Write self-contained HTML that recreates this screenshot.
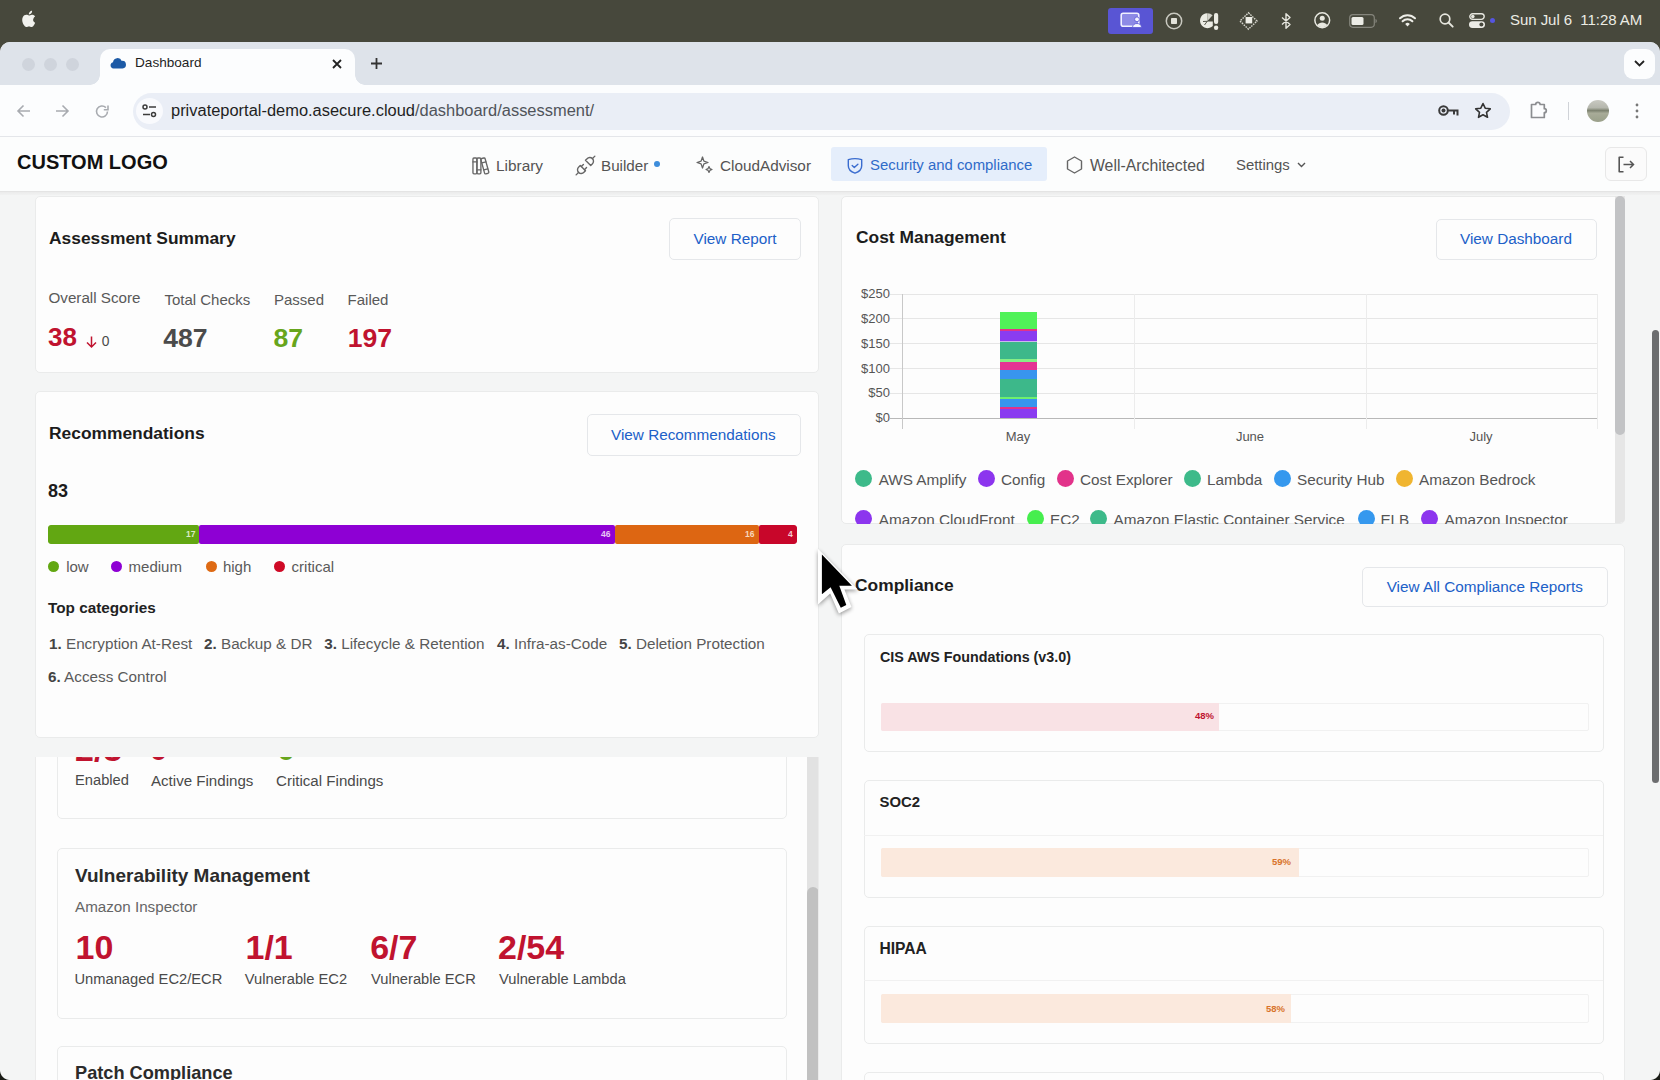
<!DOCTYPE html>
<html><head><meta charset="utf-8"><title>Dashboard</title>
<style>
*{box-sizing:border-box;margin:0;padding:0}
html,body{width:1660px;height:1080px;overflow:hidden}
body{position:relative;background:#f4f5f5;font-family:"Liberation Sans",sans-serif;color:#222}
.a{position:absolute}
.t{position:absolute;white-space:nowrap;line-height:1}
svg{position:absolute;overflow:visible}
/* menubar */
#menubar{left:0;top:0;width:1660px;height:56px;background:#47483c}
/* browser chrome */
#win{left:0;top:42px;width:1660px;height:1038px;background:#f4f5f5;border-radius:10px 10px 0 0;overflow:hidden}
#tabstrip{left:0;top:0;width:1660px;height:43px;background:#dee3ea}
#toolbar{left:0;top:43px;width:1660px;height:52px;background:#fcfdfe;border-bottom:1px solid #e4e6ea}
#tab{left:100px;top:6.5px;width:255px;height:36.5px;background:#fcfdfe;border-radius:10px 10px 0 0}
#addr{left:133px;top:51px;width:1377px;height:37px;background:#eaeef6;border-radius:18.5px}
.card{position:absolute;background:#fdfdfd;border:1px solid #eaebeb;border-radius:5px}
.btn{position:absolute;background:#fdfdfd;border:1px solid #e5e7ea;border-radius:5px;color:#1f5fc4;font-size:15px;text-align:center}
.h{font-weight:bold;color:#1c1c1c}
.lato{color:#333}
</style></head>
<body>
<div id="menubar" class="a">
  <svg style="left:21px;top:10px" width="15" height="18" viewBox="0 0 15 18"><path fill="#f2f2ee" d="M12.3 9.6c0-2.1 1.7-3.1 1.8-3.2-1-1.4-2.5-1.6-3-1.7-1.3-.1-2.5.8-3.1.8-.7 0-1.7-.8-2.7-.7C3.9 4.8 2.6 5.6 1.9 6.9.5 9.4 1.5 13 2.9 15c.7 1 1.5 2 2.5 2s1.4-.6 2.6-.6 1.5.6 2.6.6 1.8-1 2.4-2c.8-1.1 1.1-2.2 1.1-2.3 0 0-2.1-.8-2.1-3.1zM10.3 3.3c.6-.7.9-1.6.8-2.6-.8 0-1.8.5-2.4 1.2-.5.6-1 1.6-.9 2.5.9.1 1.9-.4 2.5-1.1z"/></svg>
  <div class="a" style="left:1108px;top:7.5px;width:45px;height:26.5px;background:#5955d4;border-radius:3px"></div>
  <svg style="left:1120px;top:12px" width="24" height="16" viewBox="0 0 24 16"><rect x="1.2" y="1.2" width="17.6" height="13" rx="2" fill="#8d8ae6" stroke="#f0f0ff" stroke-width="1.6"/><circle cx="17" cy="7.3" r="2.4" fill="#f4f4ff" stroke="#5955d4" stroke-width=".8"/><path d="M12.5 15.5c0-2.6 2-4 4.5-4s4.5 1.4 4.5 4z" fill="#f4f4ff" stroke="#5955d4" stroke-width=".8"/></svg>
  <svg style="left:1165px;top:11.5px" width="18" height="18" viewBox="0 0 18 18"><circle cx="9" cy="9" r="7.7" fill="none" stroke="#c9c9c0" stroke-width="1.5"/><rect x="6" y="6" width="6" height="6" rx=".8" fill="#e2e2da"/></svg>
  <svg style="left:1200px;top:11.5px" width="20" height="19" viewBox="0 0 20 19"><path d="M7 1.2A7.5 7.5 0 1 0 12.8 14V9.5L7 9.5z" fill="#ecece4"/><path d="M7.2 9.3L12.6 3.2A7.5 7.5 0 0 0 7.2 1.2z" fill="#ecece4" opacity=".85"/><path d="M3 9.5l4.2-.2M4.5 13l2.7-3.7" stroke="#45463b" stroke-width=".9"/><rect x="14" y="1" width="4.2" height="11" rx="2" fill="#ecece4"/><circle cx="16.1" cy="15.8" r="2.2" fill="#ecece4"/></svg>
  <svg style="left:1239px;top:11.5px" width="19" height="18" viewBox="0 0 19 18"><path d="M9.5 .8L18 9 9.5 17.2 1 9z" fill="none" stroke="#d5d5cc" stroke-width="1.4" stroke-dasharray="1.6 1"/><rect x="6.6" y="5" width="6.6" height="6.4" fill="#efefe8"/></svg>
  <svg style="left:1280.5px;top:12.5px" width="11" height="16" viewBox="0 0 11 16"><path d="M1 4.5l8 7-4 3.8V.7l4 3.8-8 7" fill="none" stroke="#e6e6de" stroke-width="1.4" stroke-linejoin="round"/></svg>
  <svg style="left:1313.5px;top:12.2px" width="16.5" height="16.5" viewBox="0 0 16.5 16.5"><circle cx="8.25" cy="8.25" r="7.4" fill="none" stroke="#e8e8e0" stroke-width="1.5"/><circle cx="8.25" cy="6.3" r="2.5" fill="#e8e8e0"/><path d="M3.2 13.2c1.2-1.9 3-2.8 5.05-2.8s3.85.9 5.05 2.8A7.4 7.4 0 0 1 3.2 13.2z" fill="#e8e8e0"/></svg>
  <svg style="left:1349px;top:13.5px" width="29" height="14" viewBox="0 0 29 14"><rect x=".7" y=".7" width="24.6" height="12.6" rx="3.2" fill="none" stroke="#85857c" stroke-width="1.2"/><rect x="2.5" y="3" width="12" height="8" rx="1.5" fill="#ecece6"/><path d="M26.5 5v4c.9-.3 1.3-1 1.3-2s-.4-1.7-1.3-2z" fill="#85857c"/></svg>
  <svg style="left:1398px;top:13px" width="19" height="14" viewBox="0 0 19 14"><path d="M9.5 13.5l-2.3-2.6a3.4 3.4 0 0 1 4.6 0z" fill="#eeeee8"/><path d="M4.6 8.2a7 7 0 0 1 9.8 0M2 5.2a10.7 10.7 0 0 1 15 0" fill="none" stroke="#eeeee8" stroke-width="2" stroke-linecap="round"/></svg>
  <svg style="left:1439px;top:13px" width="15" height="15" viewBox="0 0 15 15"><circle cx="6" cy="6" r="4.8" fill="none" stroke="#e6e6de" stroke-width="1.7"/><path d="M9.5 9.5l4.2 4.2" stroke="#e6e6de" stroke-width="1.9" stroke-linecap="round"/></svg>
  <svg style="left:1469px;top:13px" width="16" height="15" viewBox="0 0 16 15"><rect x=".8" y=".8" width="14.4" height="5.6" rx="2.8" fill="none" stroke="#e6e6de" stroke-width="1.4"/><circle cx="3.8" cy="3.6" r="1.8" fill="#e6e6de"/><rect x="0" y="8.2" width="16" height="6.8" rx="3.4" fill="#ecece6"/><circle cx="12.4" cy="11.6" r="2" fill="#45463b"/></svg>
  <div class="a" style="left:1490px;top:18px;width:5px;height:5px;border-radius:50%;background:#5555e0"></div>
  <div class="t" style="left:1510px;top:12px;font-size:15px;color:#ececE4;letter-spacing:-0.05px">Sun Jul 6&nbsp;&nbsp;11:28 AM</div>
</div>
<div id="win" class="a">
  <div id="tabstrip" class="a"></div>
  <div id="tab" class="a"></div>
  <div class="a" style="left:90px;top:33px;width:10px;height:10px;background:radial-gradient(circle at 0 0,transparent 9.5px,#fcfdfe 10px)"></div>
  <div class="a" style="left:355px;top:33px;width:10px;height:10px;background:radial-gradient(circle at 100% 0,transparent 9.5px,#fcfdfe 10px)"></div>
  <div id="toolbar" class="a"></div>
  <div id="addr" class="a"></div>
  <div class="a" style="left:22px;top:16px;width:13px;height:13px;border-radius:50%;background:#cfd4dc"></div>
  <div class="a" style="left:44px;top:16px;width:13px;height:13px;border-radius:50%;background:#cfd4dc"></div>
  <div class="a" style="left:66px;top:16px;width:13px;height:13px;border-radius:50%;background:#cfd4dc"></div>
  <svg style="left:110px;top:15px" width="16" height="12" viewBox="0 0 16 12"><path d="M3.5 11.5A3.2 3.2 0 0 1 3 5.2a4.6 4.6 0 0 1 8.8-1.3A3.8 3.8 0 0 1 12.5 11.5z" fill="#1d5aa6"/></svg>
  <div class="t" style="left:135px;top:14px;font-size:13.6px;color:#1f1f1f">Dashboard</div>
  <svg style="left:332px;top:17px" width="10" height="10" viewBox="0 0 10 10"><path d="M1 1l8 8M9 1L1 9" stroke="#222" stroke-width="1.8"/></svg>
  <svg style="left:371px;top:16px" width="11" height="11" viewBox="0 0 11 11"><path d="M5.5 0v11M0 5.5h11" stroke="#333" stroke-width="1.8"/></svg>
  <div class="a" style="left:1624px;top:7px;width:31px;height:30px;border-radius:9px;background:#fcfdfe"></div>
  <svg style="left:1634px;top:18px" width="11" height="7" viewBox="0 0 11 7"><path d="M1 1l4.5 4.5L10 1" fill="none" stroke="#222" stroke-width="1.8"/></svg>
  <!-- toolbar icons -->
  <svg style="left:16px;top:62px" width="15" height="14" viewBox="0 0 15 14"><path d="M14 7H2M7.5 1.5L2 7l5.5 5.5" fill="none" stroke="#a8abb0" stroke-width="1.6"/></svg>
  <svg style="left:55px;top:62px" width="15" height="14" viewBox="0 0 15 14"><path d="M1 7h12M7.5 1.5L13 7l-5.5 5.5" fill="none" stroke="#a8abb0" stroke-width="1.6"/></svg>
  <svg style="left:95px;top:62px" width="15" height="15" viewBox="0 0 15 15"><path d="M12.5 7.5a5.5 5.5 0 1 1-1.6-3.9" fill="none" stroke="#a8abb0" stroke-width="1.6"/><path d="M13 1.5v4.2H8.8" fill="none" stroke="#a8abb0" stroke-width="1.6"/></svg>
  <div class="a" style="left:136px;top:56px;width:27px;height:26px;border-radius:50%;background:#f9fafd"></div>
  <svg style="left:142px;top:62px" width="15" height="14" viewBox="0 0 15 14"><circle cx="3" cy="3" r="2" fill="none" stroke="#3c3c3c" stroke-width="1.5"/><path d="M7 3h7M1 10.5h7" stroke="#3c3c3c" stroke-width="1.6"/><circle cx="11.5" cy="10.5" r="2" fill="none" stroke="#3c3c3c" stroke-width="1.5"/></svg>
  <div class="t" style="left:171px;top:60px;font-size:16.45px;color:#1f1f1f">privateportal-demo.asecure.cloud<span style="color:#50545a">/dashboard/assessment/</span></div>
  <svg style="left:1438px;top:62px" width="21" height="14" viewBox="0 0 21 14"><circle cx="5.5" cy="6.5" r="4.3" fill="none" stroke="#3a3a3a" stroke-width="2"/><circle cx="5.5" cy="6.5" r="2" fill="#3a3a3a"/><path d="M9.8 6.5H19.5v5M16 6.5v4" fill="none" stroke="#3a3a3a" stroke-width="2"/></svg>
  <svg style="left:1474px;top:60px" width="18" height="17" viewBox="0 0 18 17"><path d="M9 1.5l2.2 4.7 5.1.6-3.8 3.5 1 5-4.5-2.5-4.5 2.5 1-5L1.7 6.8l5.1-.6z" fill="none" stroke="#333" stroke-width="1.6" stroke-linejoin="round"/></svg>
  <svg style="left:1530px;top:58px" width="19" height="19" viewBox="0 0 19 19"><path d="M1.5 4.5h4.2a2.2 2.2 0 0 1 4.4 0h4.2v4.2a2 2 0 0 1 0 4v4.8H1.5z" fill="none" stroke="#8b8d90" stroke-width="1.7" stroke-linejoin="round"/></svg>
  <div class="a" style="left:1567.5px;top:60px;width:1px;height:18px;background:#d0d3d8"></div>
  <div class="a" style="left:1586.5px;top:58px;width:22px;height:22px;border-radius:50%;background:linear-gradient(#c9c9c2 0%,#b5b7ad 35%,#7d8270 48%,#a8ab98 60%,#9aa08a 100%)"></div>
  <svg style="left:1635px;top:61px" width="4" height="16" viewBox="0 0 4 16"><circle cx="2" cy="2" r="1.4" fill="#777"/><circle cx="2" cy="8" r="1.4" fill="#777"/><circle cx="2" cy="14" r="1.4" fill="#777"/></svg>
</div>
<!-- page header -->
<div class="a" style="left:0;top:137px;width:1660px;height:55px;background:#fcfdfd;border-bottom:1px solid #e4e4e4"></div><div class="a" style="left:0;top:192px;width:1660px;height:3px;background:linear-gradient(#ebebeb,#f1f2f2)"></div>
<div class="t" style="left:17px;top:152px;font-size:20px;font-weight:bold;color:#111">CUSTOM LOGO</div>
<svg style="left:468px;top:153.5px" width="23.8" height="23.8" viewBox="0 0 24 24"><g fill="none" stroke="#666" stroke-width="1.35" stroke-linecap="round" stroke-linejoin="round"><path d="M6 4h2a1 1 0 0 1 1 1v14a1 1 0 0 1-1 1H6a1 1 0 0 1-1-1V5a1 1 0 0 1 1-1z"/><path d="M10 4h2a1 1 0 0 1 1 1v14a1 1 0 0 1-1 1h-2a1 1 0 0 1-1-1V5a1 1 0 0 1 1-1z"/><path d="M5 8h4M9 16h4"/><path d="M13.8 4.56l2.18-.53c.56-.14 1.13.19 1.28.73l3.7 13.42a1.02 1.02 0 0 1-.63 1.22l-2.32.57c-.56.14-1.13-.19-1.28-.73L13.03 5.82a1.02 1.02 0 0 1 .64-1.22z"/><path d="M14 9l4-1M16 16l3.92-.98"/></g></svg>
<div class="t" style="left:496px;top:157.7px;font-size:15.4px;color:#545454">Library</div>
<svg style="left:573px;top:152.5px" width="25" height="25" viewBox="0 0 24 24"><g fill="none" stroke="#666" stroke-width="1.35" stroke-linecap="round" stroke-linejoin="round"><path d="M7 12l5 5-1.5 1.5a3.54 3.54 0 1 1-5-5z"/><path d="M17 12l-5-5 1.5-1.5a3.54 3.54 0 1 1 5 5z"/><path d="M3 21l2.5-2.5M18.5 5.5L21 3M10 11l-2 2M13 14l-2 2"/></g></svg>
<div class="t" style="left:601px;top:157.7px;font-size:15.2px;color:#545454">Builder</div>
<div class="a" style="left:654px;top:161px;width:6px;height:6px;border-radius:50%;background:#3d8ddb"></div>
<svg style="left:696px;top:156px" width="18" height="17" viewBox="0 0 18 17"><path d="M6.5 1l1.4 4.1L12 6.5 7.9 7.9 6.5 12 5.1 7.9 1 6.5l4.1-1.4z" fill="none" stroke="#666" stroke-width="1.3" stroke-linejoin="round"/><path d="M13 10.5l.9 2.1 2.1.9-2.1.9L13 16.5l-.9-2.1-2.1-.9 2.1-.9z" fill="none" stroke="#666" stroke-width="1.2" stroke-linejoin="round"/></svg>
<div class="t" style="left:720px;top:157.7px;font-size:15.3px;color:#545454">CloudAdvisor</div>
<div class="a" style="left:831px;top:147px;width:216px;height:34px;background:#e5eefb;border-radius:3px"></div>
<svg style="left:847px;top:156.5px" width="16" height="17" viewBox="0 0 16 17"><path d="M1.3 2.6Q8 0.6 14.7 2.6V8.8C14.7 12.4 11.8 15 8 16.2 4.2 15 1.3 12.4 1.3 8.8Z" fill="none" stroke="#3a6ccf" stroke-width="1.4" stroke-linejoin="round"/><path d="M5.2 8.6l2.1 2 3.6-3.4" fill="none" stroke="#3a6ccf" stroke-width="1.4" stroke-linecap="round" stroke-linejoin="round"/></svg>
<div class="t" style="left:870px;top:157.7px;font-size:14.9px;color:#2f6bc9">Security and compliance</div>
<svg style="left:1066px;top:156px" width="17" height="18" viewBox="0 0 17 18"><path d="M8.5 1l7 4v8l-7 4-7-4V5z" fill="none" stroke="#666" stroke-width="1.4" stroke-linejoin="round"/></svg>
<div class="t" style="left:1090px;top:157.7px;font-size:15.8px;color:#545454">Well-Architected</div>
<div class="t" style="left:1236px;top:157.7px;font-size:14.9px;color:#545454">Settings</div>
<svg style="left:1297px;top:162px" width="9" height="6" viewBox="0 0 9 6"><path d="M1 1l3.5 3.5L8 1" fill="none" stroke="#555" stroke-width="1.4"/></svg>
<div class="a" style="left:1605px;top:147px;width:42px;height:34px;border:1px solid #e8e8e8;border-radius:6px;background:#fbfbfb"></div>
<svg style="left:1617px;top:156px" width="18" height="17" viewBox="0 0 18 17"><path d="M6.5 1.2H2.2v14.6h4.3" fill="none" stroke="#555" stroke-width="1.6" stroke-linejoin="round"/><path d="M6.5 8.5h10M13 5l3.5 3.5L13 12" fill="none" stroke="#555" stroke-width="1.5"/></svg>
<!-- LEFT COLUMN -->
<div class="card" style="left:35px;top:196px;width:784px;height:177px"></div>
<div class="t h" style="left:49px;top:229.5px;font-size:17.4px">Assessment Summary</div>
<div class="btn" style="left:669px;top:218px;width:132px;height:42px"></div>
<div class="t" style="left:693.5px;top:231px;font-size:15.3px;color:#2060c8">View Report</div>
<div class="t" style="left:48.5px;top:289.5px;font-size:15.2px;color:#595959">Overall Score</div>
<div class="t" style="left:164.4px;top:292.3px;font-size:15px;color:#595959">Total Checks</div>
<div class="t" style="left:274px;top:292.3px;font-size:15px;color:#595959">Passed</div>
<div class="t" style="left:347.6px;top:292.3px;font-size:15px;color:#595959">Failed</div>
<div class="t" style="left:48px;top:324px;font-size:26px;font-weight:bold;color:#c0132f">38</div>
<svg style="left:86px;top:335.5px" width="11" height="12" viewBox="0 0 11 12"><path d="M5.5 0.5v10.5M1 6.5l4.5 4.5L10 6.5" fill="none" stroke="#c0132f" stroke-width="1.5"/></svg>
<div class="t" style="left:101.8px;top:334.6px;font-size:13.8px;color:#4a4a4a">0</div>
<div class="t" style="left:163.2px;top:325.2px;font-size:26.6px;font-weight:bold;color:#4b4b4b">487</div>
<div class="t" style="left:273.5px;top:325.2px;font-size:26.6px;font-weight:bold;color:#67a51c">87</div>
<div class="t" style="left:347.7px;top:325.2px;font-size:26.6px;font-weight:bold;color:#c0132f">197</div>

<div class="card" style="left:35px;top:391px;width:784px;height:347px"></div>
<div class="t h" style="left:49px;top:424.7px;font-size:17.4px">Recommendations</div>
<div class="btn" style="left:587px;top:414px;width:214px;height:42px"></div>
<div class="t" style="left:611px;top:426.5px;font-size:15.3px;color:#2060c8">View Recommendations</div>
<div class="t h" style="left:48px;top:481.5px;font-size:18px">83</div>
<div class="a" style="left:48px;top:525px;width:749px;height:19px;border-radius:3px;overflow:hidden">
  <div class="a" style="left:0;top:0;width:151px;height:19px;background:#62a712;border-radius:2px"></div>
  <div class="a" style="left:151px;top:0;width:416px;height:19px;background:#8e00d4;border-radius:2px"></div>
  <div class="a" style="left:567px;top:0;width:144px;height:19px;background:#dd6612;border-radius:2px"></div>
  <div class="a" style="left:711px;top:0;width:38px;height:19px;background:#c8062a;border-radius:2px"></div>
  <div class="t" style="left:138px;top:5px;font-size:8.5px;font-weight:bold;color:#d9ecc4">17</div>
  <div class="t" style="left:553px;top:5px;font-size:8.5px;font-weight:bold;color:#e8c8f5">46</div>
  <div class="t" style="left:697px;top:5px;font-size:8.5px;font-weight:bold;color:#f7d7bd">16</div>
  <div class="t" style="left:740px;top:5px;font-size:8.5px;font-weight:bold;color:#f5c9cf">4</div>
</div>
<div class="a" style="left:48px;top:561px;width:11px;height:11px;border-radius:50%;background:#62a712"></div>
<div class="t" style="left:66.2px;top:559.3px;font-size:15px;color:#5a5a5a">low</div>
<div class="a" style="left:111px;top:561px;width:11px;height:11px;border-radius:50%;background:#8e00d4"></div>
<div class="t" style="left:128.6px;top:559.3px;font-size:15px;color:#5a5a5a">medium</div>
<div class="a" style="left:205.5px;top:561px;width:11px;height:11px;border-radius:50%;background:#de6a14"></div>
<div class="t" style="left:222.9px;top:559.3px;font-size:15px;color:#5a5a5a">high</div>
<div class="a" style="left:274px;top:561px;width:11px;height:11px;border-radius:50%;background:#cf0a26"></div>
<div class="t" style="left:291.6px;top:559.3px;font-size:15px;color:#5a5a5a">critical</div>
<div class="t h" style="left:48px;top:600.1px;font-size:15.3px;color:#222">Top categories</div>
<div class="t" style="left:49px;top:636.4px;font-size:15.25px;color:#5a5a5a"><b style="color:#444">1.</b> Encryption At-Rest</div>
<div class="t" style="left:204px;top:636.4px;font-size:15.25px;color:#5a5a5a"><b style="color:#444">2.</b> Backup &amp; DR</div>
<div class="t" style="left:324.3px;top:636.4px;font-size:15.25px;color:#5a5a5a"><b style="color:#444">3.</b> Lifecycle &amp; Retention</div>
<div class="t" style="left:497px;top:636.4px;font-size:15.25px;color:#5a5a5a"><b style="color:#444">4.</b> Infra-as-Code</div>
<div class="t" style="left:619px;top:636.4px;font-size:15.25px;color:#5a5a5a"><b style="color:#444">5.</b> Deletion Protection</div>
<div class="t" style="left:48px;top:668.9px;font-size:15.25px;color:#5a5a5a"><b style="color:#444">6.</b> Access Control</div>

<!-- lower scroll container -->
<div class="a" style="left:35px;top:757px;width:784px;height:330px;background:#fdfdfd;border-left:1px solid #ebebeb;border-right:1px solid #ebebeb;overflow:hidden">
  <div class="card" style="left:20.5px;top:-80px;width:730px;height:142px"></div>
  <div class="t" style="left:39px;top:-25px;font-size:34px;font-weight:bold;color:#c0132f">2/3</div>
  <div class="t" style="left:113.5px;top:-25px;font-size:33px;font-weight:bold;color:#c0132f">0</div>
  <div class="t" style="left:241px;top:-25px;font-size:33px;font-weight:bold;color:#67a51c">0</div>
  <div class="t" style="left:39px;top:16px;font-size:14.7px;color:#4a4a4a">Enabled</div>
  <div class="t" style="left:115px;top:16px;font-size:15.1px;color:#4a4a4a">Active Findings</div>
  <div class="t" style="left:240px;top:16px;font-size:15.1px;color:#4a4a4a">Critical Findings</div>
  <div class="card" style="left:20.5px;top:91px;width:730px;height:171px"></div>
  <div class="t" style="left:39px;top:109.4px;font-size:19px;font-weight:bold;color:#2b2b2b">Vulnerability Management</div>
  <div class="t" style="left:39px;top:142px;font-size:15.2px;color:#666">Amazon Inspector</div>
  <div class="t" style="left:39.5px;top:173px;font-size:34px;font-weight:bold;color:#c0132f">10</div>
  <div class="t" style="left:209.5px;top:173px;font-size:34px;font-weight:bold;color:#c0132f">1/1</div>
  <div class="t" style="left:334.2px;top:173px;font-size:34px;font-weight:bold;color:#c0132f">6/7</div>
  <div class="t" style="left:462px;top:173px;font-size:34px;font-weight:bold;color:#c0132f">2/54</div>
  <div class="t" style="left:38.5px;top:215px;font-size:14.7px;color:#4a4a4a">Unmanaged EC2/ECR</div>
  <div class="t" style="left:208.8px;top:215px;font-size:14.7px;color:#4a4a4a">Vulnerable EC2</div>
  <div class="t" style="left:335px;top:215px;font-size:14.7px;color:#4a4a4a">Vulnerable ECR</div>
  <div class="t" style="left:463px;top:215px;font-size:14.7px;color:#4a4a4a">Vulnerable Lambda</div>
  <div class="card" style="left:20.5px;top:289px;width:730px;height:171px"></div>
  <div class="t" style="left:39px;top:307px;font-size:18.2px;font-weight:bold;color:#2b2b2b">Patch Compliance</div>
  <div class="a" style="left:771px;top:0;width:12px;height:330px;background:#e2e2e2"></div>
  <div class="a" style="left:771px;top:130px;width:12px;height:200px;background:#c1c1c1;border-radius:6px 6px 0 0"></div>
</div>
<!-- RIGHT COLUMN -->
<div class="a" style="left:841px;top:196px;width:784px;height:328px;background:#fdfdfd;border:1px solid #e9eaea;border-radius:5px;overflow:hidden"></div>
<div class="t h" style="left:856px;top:229.3px;font-size:17.4px">Cost Management</div>
<div class="btn" style="left:1436px;top:219px;width:161px;height:41px"></div>
<div class="t" style="left:1460px;top:231px;font-size:15.3px;color:#2060c8">View Dashboard</div>
<div class="a" style="left:890px;top:293.5px;width:707px;height:1px;background:#e6e6e6"></div><div class="t" style="left:790px;width:100px;text-align:right;top:287.0px;font-size:13px;color:#555">$250</div><div class="a" style="left:890px;top:318.4px;width:707px;height:1px;background:#e6e6e6"></div><div class="t" style="left:790px;width:100px;text-align:right;top:311.9px;font-size:13px;color:#555">$200</div><div class="a" style="left:890px;top:343.2px;width:707px;height:1px;background:#e6e6e6"></div><div class="t" style="left:790px;width:100px;text-align:right;top:336.7px;font-size:13px;color:#555">$150</div><div class="a" style="left:890px;top:368.1px;width:707px;height:1px;background:#e6e6e6"></div><div class="t" style="left:790px;width:100px;text-align:right;top:361.6px;font-size:13px;color:#555">$100</div><div class="a" style="left:890px;top:392.9px;width:707px;height:1px;background:#e6e6e6"></div><div class="t" style="left:790px;width:100px;text-align:right;top:386.4px;font-size:13px;color:#555">$50</div><div class="a" style="left:890px;top:417.8px;width:707px;height:1px;background:#e6e6e6"></div><div class="t" style="left:790px;width:100px;text-align:right;top:411.3px;font-size:13px;color:#555">$0</div><div class="a" style="left:890px;top:417.8px;width:707px;height:1px;background:#b8b8b8"></div><div class="a" style="left:901.5px;top:294px;width:1px;height:135px;background:#c8c8c8"></div><div class="a" style="left:1133.5px;top:294px;width:1px;height:135px;background:#ececec"></div><div class="a" style="left:1365.5px;top:294px;width:1px;height:135px;background:#ececec"></div><div class="a" style="left:1596.5px;top:294px;width:1px;height:135px;background:#ececec"></div><div class="t" style="left:968px;width:100px;text-align:center;top:429.5px;font-size:13px;color:#555">May</div><div class="t" style="left:1200px;width:100px;text-align:center;top:429.5px;font-size:13px;color:#555">June</div><div class="t" style="left:1431px;width:100px;text-align:center;top:429.5px;font-size:13px;color:#555">July</div>
<div class="a" style="left:999.5px;top:311.9px;width:37.3px;height:17.0px;background:#50f258"></div><div class="a" style="left:999.5px;top:328.9px;width:37.3px;height:2.2px;background:#e2328a"></div><div class="a" style="left:999.5px;top:331.1px;width:37.3px;height:9.5px;background:#8a3cf0"></div><div class="a" style="left:999.5px;top:340.6px;width:37.3px;height:1.6px;background:#c9b9ee"></div><div class="a" style="left:999.5px;top:342.2px;width:37.3px;height:17.2px;background:#3db88a"></div><div class="a" style="left:999.5px;top:359.4px;width:37.3px;height:2.3px;background:#86ee86"></div><div class="a" style="left:999.5px;top:361.7px;width:37.3px;height:8.3px;background:#e43393"></div><div class="a" style="left:999.5px;top:370px;width:37.3px;height:9.4px;background:#3895ee"></div><div class="a" style="left:999.5px;top:379.4px;width:37.3px;height:17.3px;background:#3db88a"></div><div class="a" style="left:999.5px;top:396.7px;width:37.3px;height:2.7px;background:#6ef06e"></div><div class="a" style="left:999.5px;top:399.4px;width:37.3px;height:7.3px;background:#3895ee"></div><div class="a" style="left:999.5px;top:406.7px;width:37.3px;height:2.2px;background:#e2328a"></div><div class="a" style="left:999.5px;top:408.9px;width:37.3px;height:9.4px;background:#8a3cf0"></div>
<div class="a" style="left:841px;top:196px;width:784px;height:328px;overflow:hidden">
<div class="a" style="left:calc(-841px + 855.3px);top:calc(-196px + 470.0px);width:17px;height:17px;border-radius:50%;background:#3dba8a"></div><div class="t" style="left:calc(-841px + 878.7px);top:calc(-196px + 472.1px);font-size:15.3px;color:#555">AWS Amplify</div><div class="a" style="left:calc(-841px + 978.2px);top:calc(-196px + 470.0px);width:17px;height:17px;border-radius:50%;background:#8c35ee"></div><div class="t" style="left:calc(-841px + 1001px);top:calc(-196px + 472.1px);font-size:15.3px;color:#555">Config</div><div class="a" style="left:calc(-841px + 1056.5px);top:calc(-196px + 470.0px);width:17px;height:17px;border-radius:50%;background:#e2328a"></div><div class="t" style="left:calc(-841px + 1080px);top:calc(-196px + 472.1px);font-size:15.3px;color:#555">Cost Explorer</div><div class="a" style="left:calc(-841px + 1183.5px);top:calc(-196px + 470.0px);width:17px;height:17px;border-radius:50%;background:#3dba8a"></div><div class="t" style="left:calc(-841px + 1207px);top:calc(-196px + 472.1px);font-size:15.3px;color:#555">Lambda</div><div class="a" style="left:calc(-841px + 1274.0px);top:calc(-196px + 470.0px);width:17px;height:17px;border-radius:50%;background:#3598ee"></div><div class="t" style="left:calc(-841px + 1297px);top:calc(-196px + 472.1px);font-size:15.3px;color:#555">Security Hub</div><div class="a" style="left:calc(-841px + 1396.0px);top:calc(-196px + 470.0px);width:17px;height:17px;border-radius:50%;background:#f0b530"></div><div class="t" style="left:calc(-841px + 1419px);top:calc(-196px + 472.1px);font-size:15.3px;color:#555">Amazon Bedrock</div><div class="a" style="left:calc(-841px + 855.3px);top:calc(-196px + 510.0px);width:17px;height:17px;border-radius:50%;background:#8c35ee"></div><div class="t" style="left:calc(-841px + 878.7px);top:calc(-196px + 512.0999999999999px);font-size:15.3px;color:#555">Amazon CloudFront</div><div class="a" style="left:calc(-841px + 1026.5px);top:calc(-196px + 510.0px);width:17px;height:17px;border-radius:50%;background:#46ee4e"></div><div class="t" style="left:calc(-841px + 1050px);top:calc(-196px + 512.0999999999999px);font-size:15.3px;color:#555">EC2</div><div class="a" style="left:calc(-841px + 1089.5px);top:calc(-196px + 510.0px);width:17px;height:17px;border-radius:50%;background:#3dba8a"></div><div class="t" style="left:calc(-841px + 1113.5px);top:calc(-196px + 512.0999999999999px);font-size:15.3px;color:#555">Amazon Elastic Container Service</div><div class="a" style="left:calc(-841px + 1357.5px);top:calc(-196px + 510.0px);width:17px;height:17px;border-radius:50%;background:#3598ee"></div><div class="t" style="left:calc(-841px + 1380.4px);top:calc(-196px + 512.0999999999999px);font-size:15.3px;color:#555">ELB</div><div class="a" style="left:calc(-841px + 1420.8px);top:calc(-196px + 510.0px);width:17px;height:17px;border-radius:50%;background:#8c35ee"></div><div class="t" style="left:calc(-841px + 1444.5px);top:calc(-196px + 512.0999999999999px);font-size:15.3px;color:#555">Amazon Inspector</div>
</div>
<div class="a" style="left:1614.5px;top:196px;width:10.5px;height:327px;background:#e6e6e6;border-radius:0 0 5px 0"></div>
<div class="a" style="left:1614.5px;top:196px;width:10.5px;height:239px;background:#c2c3c5;border-radius:5px"></div>

<div class="card" style="left:841px;top:544px;width:784px;height:600px"></div>
<div class="t h" style="left:855px;top:576.6px;font-size:17.4px">Compliance</div>
<div class="btn" style="left:1362px;top:566.5px;width:246px;height:40.5px"></div>
<div class="t" style="left:1386.7px;top:578.6px;font-size:15.3px;color:#2060c8">View All Compliance Reports</div>

<div class="card" style="left:863.5px;top:634px;width:740px;height:118px"></div>
<div class="t" style="left:880px;top:649.6px;font-size:14.3px;font-weight:bold;color:#222">CIS AWS Foundations (v3.0)</div>
<div class="a" style="left:880.5px;top:702.5px;width:708.5px;height:28px;border:1px solid #f1f1f1;border-radius:2px"></div>
<div class="a" style="left:880.5px;top:702.5px;width:338.5px;height:28px;background:#f9e2e5;border-radius:2px 0 0 2px"></div>
<div class="t" style="left:1164px;width:50px;text-align:right;top:711px;font-size:9.5px;font-weight:bold;color:#c0132f">48%</div>

<div class="card" style="left:863.5px;top:780px;width:740px;height:118px"></div>
<div class="t" style="left:879.5px;top:795.3px;font-size:14.9px;font-weight:bold;color:#222">SOC2</div>
<div class="a" style="left:864px;top:835px;width:739px;height:1px;background:#f1f1f1"></div>
<div class="a" style="left:880.5px;top:847.5px;width:708.5px;height:29px;border:1px solid #f1f1f1;border-radius:2px"></div>
<div class="a" style="left:880.5px;top:847.5px;width:418px;height:29px;background:#fbe9dd;border-radius:2px 0 0 2px"></div>
<div class="t" style="left:1241px;width:50px;text-align:right;top:857px;font-size:9.5px;font-weight:bold;color:#d8732a">59%</div>

<div class="card" style="left:863.5px;top:926px;width:740px;height:118px"></div>
<div class="t" style="left:879.5px;top:940.6px;font-size:15.6px;font-weight:bold;color:#222">HIPAA</div>
<div class="a" style="left:864px;top:980px;width:739px;height:1px;background:#f1f1f1"></div>
<div class="a" style="left:880.5px;top:994px;width:708.5px;height:29px;border:1px solid #f1f1f1;border-radius:2px"></div>
<div class="a" style="left:880.5px;top:994px;width:410px;height:29px;background:#fbe9dd;border-radius:2px 0 0 2px"></div>
<div class="t" style="left:1235px;width:50px;text-align:right;top:1003.5px;font-size:9.5px;font-weight:bold;color:#d8732a">58%</div>

<div class="card" style="left:863.5px;top:1071.5px;width:740px;height:118px"></div>

<div class="a" style="left:1652px;top:330px;width:7px;height:453px;background:#6c6d6f;border-radius:4px"></div>

<!-- cursor -->
<svg style="left:812px;top:544px" width="52" height="76" viewBox="812 544 52 76">
  <defs><filter id="sh" x="-30%" y="-30%" width="160%" height="160%"><feGaussianBlur stdDeviation="2"/></filter></defs>
  <path d="M818 548.7V604.6L830.2 593.5L838.9 613.6L851.5 607L844.4 589.6H857.8Z" fill="#000" opacity="0.4" filter="url(#sh)" transform="translate(0 1.5)"/>
  <path d="M818 548.7V604.6L830.2 593.5L838.9 613.6L851.5 607L844.4 589.6H857.8Z" fill="#fff"/>
  <path d="M821.9 554.6V594.3L830.6 587.2L840.8 607.7L846.3 605L839.3 585.7H851.9Z" fill="#000"/>
</svg>
<div class="a" style="left:0;top:1070px;width:10px;height:10px;background:radial-gradient(circle at 10px 0,transparent 9.5px,#1a1c16 10.5px)"></div>
<div class="a" style="left:1650px;top:1070px;width:10px;height:10px;background:radial-gradient(circle at 0 0,transparent 9.5px,#1a1c16 10.5px)"></div>
</body></html>
